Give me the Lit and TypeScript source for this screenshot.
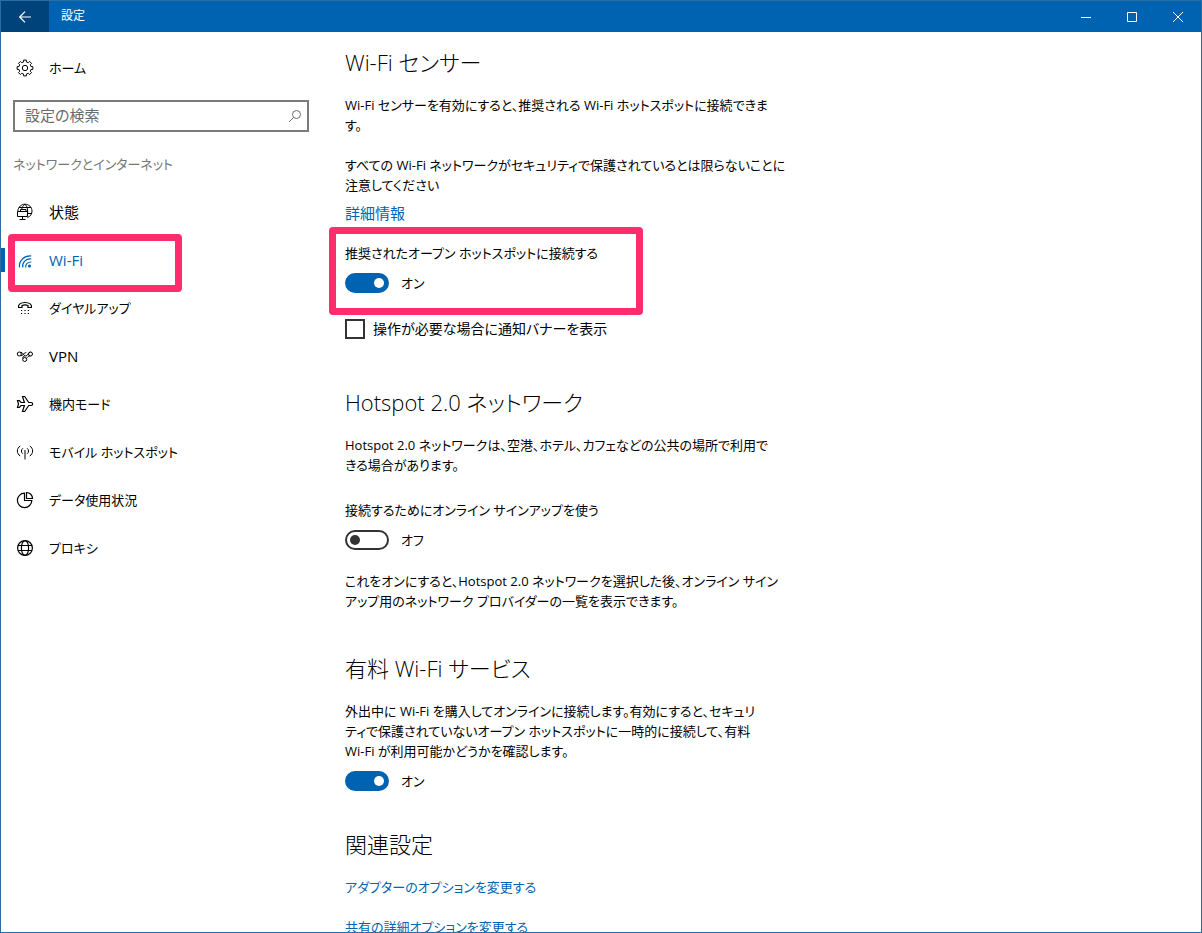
import { LitElement, html, css, svg, nothing } from "lit";
import { customElement, state } from "lit/decorators.js";
import { classMap } from "lit/directives/class-map.js";

// Outline of an eight-toothed cog centred in the 18-unit icon box.
const cog = (() => {
  const pts: string[] = [];
  for (let i = 0; i < 8; i++) {
    const a = (i * Math.PI) / 4;
    for (const [d, r] of [[-0.24, 6.2], [-0.17, 8], [0.17, 8], [0.24, 6.2]]) {
      pts.push(`${(9 + r * Math.sin(a + d)).toFixed(2)} ${(9 - r * Math.cos(a + d)).toFixed(2)}`);
    }
  }
  return `M${pts.join("L")}Z`;
})();

const icons = {
  gear: svg`<circle cx="9" cy="9" r="2.700"/><path d=${cog}/>`,
  status: svg`<path d="M1.800 8C2.300 4 5.200 1.200 9 1.200c3.900 0 7 3 7 6.800 0 3.200-1.700 5.500-4.500 6.500M9 1.200C6.800 2.700 6 4.500 5.700 6.500M9 1.200c2.600 2.300 3.200 6.500 2.300 11.500M3 4.500h12M12 10.500h3.800"/><path d="M1.500 8.500h10v5h-10zM4.500 8.500v-2h5.500v2M6.500 13.500V16M3.500 16.500h6"/>`,
  wifi: svg`<circle cx="13.500" cy="15" r="1.600" fill="currentColor" stroke="none"/><path d="M9.700 16.500c-.3-3.500 2-5.600 5.600-5.500M6.700 16.500c-.6-5 3-9 8.600-8.500M3.500 16.500C2.800 9.800 8 4.500 15.300 5" stroke-width="1.200"/>`,
  dialup: svg`<path d="M2.500 8.500h3.500v-2c1.800-.7 4.200-.7 6 0v2h3.500C16 5.500 13.500 3.500 9 3.500S2 5.500 2.500 8.500z" stroke-width="1.200"/><path d="M5 11.500h1.200M8.400 11.500h1.200M11.800 11.500H13M5 14.500h1.200M8.400 14.500h1.200M11.800 14.500H13" stroke-width="1.200"/>`,
  vpn: svg`<circle cx="3.300" cy="7" r="2"/><circle cx="14.500" cy="7" r="2"/><circle cx="8.700" cy="12.500" r="2"/><path d="M4.500 5.300C7 5 7.500 9 9.800 9c2 0 2-3.500 4.500-3.900M4.500 8.600C6.500 9.500 8 5.500 10.300 5.500M7 11.500c-.6-1.500.5-2.500 1.700-2.500M10.300 11.300c1.700-.8 1.700-2.800 4-2.400"/>`,
  plane: svg`<path d="M1.500 5.500h1.800l1.800 2h3.300L6.500 1.500h2.200l4 6h2.300c2.200 0 2.200 3 0 3h-2.300l-4 6H6.500l1.900-6H5.100l-1.800 2H1.500l1-3.500z" stroke-width="1.200"/>`,
  hotspot: svg`<path d="M9 7v9.500M6.800 10.700C5 9.500 5 6.500 6.800 5.300M11.200 10.700c1.800-1.200 1.800-4.200 0-5.400M4.200 13C.4 10.500.4 5.500 4.200 3M13.800 13c3.800-2.500 3.800-7.500 0-10"/>`,
  data: svg`<path d="M8.500 2.200a7.200 7.200 0 1 0 7.300 7.300H8.500z" stroke-width="1.200"/><path d="M10.500 1.500c3.300 0 6 2.700 6 6h-6z" stroke-width="1.200"/>`,
  globe: svg`<g stroke-width="1.200"><circle cx="9" cy="9" r="7.400"/><ellipse cx="9" cy="9" rx="3.600" ry="7.400"/><path d="M2.200 6.500h13.600M2.200 11.500h13.600"/></g>`,
};

type IconName = keyof typeof icons;

const icon = (name: IconName) =>
  html`<svg class="icon" viewBox="0 0 18 18" aria-hidden="true">${icons[name]}</svg>`;

interface NavItem {
  icon: IconName;
  label: string;
  large?: boolean;
  marked?: boolean;
}

const NAV: NavItem[] = [
  { icon: "status", label: "状態", large: true },
  { icon: "wifi", label: "Wi-Fi", large: true, marked: true },
  { icon: "dialup", label: "ダイヤルアップ" },
  { icon: "vpn", label: "VPN", large: true },
  { icon: "plane", label: "機内モード" },
  { icon: "hotspot", label: "モバイル ホットスポット" },
  { icon: "data", label: "データ使用状況" },
  { icon: "globe", label: "プロキシ" },
];

@customElement("app-root")
export class AppRoot extends LitElement {
  @state() private current = "Wi-Fi";
  @state() private switches: Record<string, boolean> = {
    open: true,
    signup: false,
    paid: true,
  };

  static styles = css`
    :host {
      --accent: #0063b1;
      --mark: #ff2d6c;
      display: flex;
      flex-direction: column;
      box-sizing: border-box;
      height: 100vh;
      overflow: hidden;
      border: 1px solid #2b6ca3;
      background: #fff;
      color: #000;
      font: 13px/20px "Open Sans", "Noto Sans CJK JP", sans-serif;
      font-feature-settings: "palt";
    }
    *,
    *::before,
    *::after {
      box-sizing: border-box;
    }
    h1, h2, p {
      margin: 0;
      font-weight: 400;
    }
    button, input {
      font: inherit;
      color: inherit;
      margin: 0;
    }
    svg {
      fill: none;
      stroke: currentColor;
      stroke-width: 1;
      flex: none;
    }
    .large {
      font-size: 15px;
    }
    .titlebar {
      display: flex;
      flex: none;
      height: 31px;
      background: var(--accent);
      color: #fff;
    }
    .titlebar h1 {
      flex: 1;
      padding-left: 12px;
      font-size: 12px;
      line-height: 30px;
    }
    .titlebar button {
      display: grid;
      place-items: center;
      width: 46px;
      padding: 0;
      border: 0;
      background: none;
    }
    .titlebar .back {
      width: 48px;
      background: #00427a;
    }
    .glyph {
      width: 12px;
      height: 12px;
    }
    .body {
      display: flex;
      flex: 1;
      min-height: 0;
    }
    .side {
      flex: none;
      width: 320px;
      padding: 12px 12px 0 0;
    }
    .item {
      position: relative;
      display: flex;
      align-items: center;
      gap: 15px;
      height: 48px;
      padding-left: 15px;
      color: inherit;
      text-decoration: none;
    }
    .icon {
      width: 18px;
      height: 18px;
    }
    .item.current {
      color: var(--accent);
    }
    .item.current::before {
      content: "";
      position: absolute;
      left: 0;
      top: 12px;
      width: 4px;
      height: 24px;
      background: var(--accent);
    }
    .item.marked::after,
    .marked-group::after {
      content: "";
      position: absolute;
      border: 7px solid var(--mark);
      border-radius: 4px;
      pointer-events: none;
    }
    .item.marked::after {
      left: 7px;
      top: -2px;
      width: 174px;
      height: 58px;
    }
    .search {
      display: flex;
      align-items: center;
      height: 32px;
      margin: 8px 0 22px 12px;
      padding: 0 5px 0 10px;
      border: 2px solid #7a7a7a;
      color: #6b6b6b;
    }
    .search input {
      flex: 1;
      min-width: 0;
      padding: 0 0 2px;
      border: 0;
      outline: 0;
      background: none;
    }
    .search input::placeholder {
      color: #6b6b6b;
      opacity: 1;
    }
    .search svg {
      width: 14px;
      height: 14px;
    }
    .group {
      padding-left: 12px;
      margin-bottom: 14px;
      color: #767676;
    }
    .content {
      flex: 1;
      min-width: 0;
      overflow: hidden;
      padding: 14px 24px 0;
    }
    .content h2 {
      margin-bottom: 17px;
      font-size: 22px;
      line-height: 32px;
      font-weight: 300;
    }
    section {
      margin-bottom: 41px;
    }
    section.roomy {
      margin-bottom: 47px;
    }
    section.tight {
      margin-bottom: 37px;
    }
    a {
      color: var(--accent);
      text-decoration: none;
    }
    .link {
      display: block;
      width: fit-content;
    }
    .link + .link {
      margin-top: 20px;
    }
    p + p {
      margin-top: 20px;
    }
    p + .link {
      margin-top: 8px;
    }
    .marked-group {
      position: relative;
      margin-top: 20px;
    }
    .marked-group::after {
      left: -16px;
      top: -16px;
      width: 314px;
      height: 88px;
    }
    .signup {
      margin: 25px 0 21px;
    }
    .field {
      display: block;
    }
    .toggle {
      display: flex;
      align-items: center;
      gap: 12px;
      width: fit-content;
      margin-top: 10px;
      line-height: 20px;
    }
    .toggle input {
      appearance: none;
      display: flex;
      align-items: center;
      width: 44px;
      height: 20px;
      padding: 0 3px;
      border: 2px solid #333;
      border-radius: 10px;
    }
    .toggle input::before {
      content: "";
      width: 10px;
      height: 10px;
      border-radius: 50%;
      background: #333;
    }
    .toggle input:checked {
      justify-content: flex-end;
      border-color: var(--accent);
      background: var(--accent);
    }
    .toggle input:checked::before {
      background: #fff;
    }
    .check {
      display: flex;
      align-items: center;
      gap: 8px;
      width: fit-content;
      margin-top: 26px;
      font-size: 14px;
    }
    .check input {
      appearance: none;
      width: 20px;
      height: 20px;
      border: 2px solid #333;
    }
    .check input:checked {
      background: var(--accent);
    }
  `;

  private toggle(key: string, label: string | null = null) {
    const on = this.switches[key];
    return html`
      ${label ? html`<label class="field" for=${key}>${label}</label>` : nothing}
      <label class="toggle">
        <input
          id=${key}
          type="checkbox"
          role="switch"
          .checked=${on}
          @change=${(e: Event) => {
            this.switches = { ...this.switches, [key]: (e.target as HTMLInputElement).checked };
          }}
        />
        ${on ? "オン" : "オフ"}
      </label>
    `;
  }

  render() {
    return html`
      <header class="titlebar">
        <button class="back" aria-label="戻る">
          <svg class="glyph" viewBox="0 0 12 12"><path d="M12 6H.7M6 .7.700 6 6 11.300" stroke-width="1.200"/></svg>
        </button>
        <h1>設定</h1>
        <button aria-label="最小化">
          <svg class="glyph" viewBox="0 0 12 12"><path d="M1 6.500h10"/></svg>
        </button>
        <button aria-label="最大化">
          <svg class="glyph" viewBox="0 0 12 12"><path d="M1.500 1.500h9v9h-9z"/></svg>
        </button>
        <button aria-label="閉じる">
          <svg class="glyph" viewBox="0 0 12 12"><path d="m1 1 10 10M11 1 1 11"/></svg>
        </button>
      </header>
      <div class="body" lang="ja">
        <nav class="side">
          <a class="item" href="#home">${icon("gear")}ホーム</a>
          <div class="search">
            <input class="large" type="text" aria-label="設定の検索" placeholder="設定の検索" />
            <svg viewBox="0 0 14 14" aria-hidden="true"><circle cx="8.500" cy="5.500" r="4"/><path d="M5.600 8.400 1 13"/></svg>
          </div>
          <p class="group">ネットワークとインターネット</p>
          ${NAV.map(
            (n) => html`<a
              class=${classMap({
                item: true,
                large: !!n.large,
                marked: !!n.marked,
                current: n.label === this.current,
              })}
              href="#"
              @click=${(e: Event) => {
                e.preventDefault();
                this.current = n.label;
              }}
              >${icon(n.icon)}${n.label}</a
            >`
          )}
        </nav>
        <main class="content">
          <section class="roomy">
            <h2>Wi-Fi センサー</h2>
            <p>Wi-Fi センサーを有効にすると、推奨される Wi-Fi ホットスポットに接続できま<br />す。</p>
            <p>すべての Wi-Fi ネットワークがセキュリティで保護されているとは限らないことに<br />注意してください</p>
            <a class="link large" href="#">詳細情報</a>
            <div class="marked-group">${this.toggle("open", "推奨されたオープン ホットスポットに接続する")}</div>
            <label class="check"><input type="checkbox" />操作が必要な場合に通知バナーを表示</label>
          </section>
          <section>
            <h2>Hotspot 2.0 ネットワーク</h2>
            <p>Hotspot 2.0 ネットワークは、空港、ホテル、カフェなどの公共の場所で利用で<br />きる場合があります。</p>
            <div class="signup">${this.toggle("signup", "接続するためにオンライン サインアップを使う")}</div>
            <p>これをオンにすると、Hotspot 2.0 ネットワークを選択した後、オンライン サイン<br />アップ用のネットワーク プロバイダーの一覧を表示できます。</p>
          </section>
          <section class="tight">
            <h2>有料 Wi-Fi サービス</h2>
            <p>外出中に Wi-Fi を購入してオンラインに接続します。有効にすると、セキュリ<br />ティで保護されていないオープン ホットスポットに一時的に接続して、有料<br />Wi-Fi が利用可能かどうかを確認します。</p>
            ${this.toggle("paid")}
          </section>
          <section>
            <h2>関連設定</h2>
            <a class="link" href="#">アダプターのオプションを変更する</a>
            <a class="link" href="#">共有の詳細オプションを変更する</a>
          </section>
        </main>
      </div>
    `;
  }
}
